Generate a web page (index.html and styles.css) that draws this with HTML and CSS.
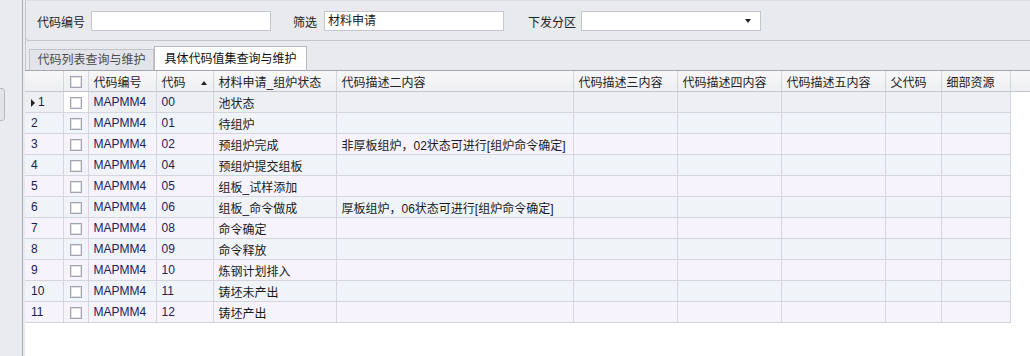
FILE: index.html
```html
<!DOCTYPE html>
<html lang="zh-CN">
<head>
    <meta charset="UTF-8">
    <title>代码值集维护</title>
    <link rel="stylesheet" href="styles.css">
</head>
<body>
    <div class="app">
        <div class="side-bar">
            <div class="side-knob"></div>
        </div>

        <div class="main">
            <!-- 查询条件 -->
            <div class="filter-panel">
                <label class="filter-label lbl-code">代码编号</label>
                <div class="text-box"></div>
                <label class="filter-label lbl-filter">筛选</label>
                <div class="text-box">材料申请</div>
                <label class="filter-label lbl-area">下发分区</label>
                <div class="combo-box"><span class="combo-arrow"></span></div>
            </div>

            <!-- 页签 -->
            <div class="tab-strip">
                <div class="tab">代码列表查询与维护</div>
                <div class="tab active">具体代码值集查询与维护</div>
            </div>

            <!-- 数据表格 -->
            <div class="grid-wrap">
                <table class="grid">
                    <colgroup>
                        <col style="width:38px">
                        <col style="width:25px">
                        <col style="width:68px">
                        <col style="width:57px">
                        <col style="width:123px">
                        <col style="width:237px">
                        <col style="width:104px">
                        <col style="width:104px">
                        <col style="width:104px">
                        <col style="width:56px">
                        <col style="width:69px">
                        <col>
                    </colgroup>
                    <thead>
                        <tr>
                            <th></th>
                            <th class="chk-cell"><span class="chk"></span></th>
                            <th>代码编号</th>
                            <th><span class="sort-up"></span>代码</th>
                            <th>材料申请_组炉状态</th>
                            <th>代码描述二内容</th>
                            <th>代码描述三内容</th>
                            <th>代码描述四内容</th>
                            <th>代码描述五内容</th>
                            <th>父代码</th>
                            <th>细部资源</th>
                            <th class="filler"></th>
                        </tr>
                    </thead>
                    <tbody id="gridBody"></tbody>
                </table>
            </div>
        </div>
    </div>

    <script>
        // 表格数据
        const rows = [
            ['00', '池状态', ''],
            ['01', '待组炉', ''],
            ['02', '预组炉完成', '非厚板组炉，02状态可进行[组炉命令确定]'],
            ['04', '预组炉提交组板', ''],
            ['05', '组板_试样添加', ''],
            ['06', '组板_命令做成', '厚板组炉，06状态可进行[组炉命令确定]'],
            ['08', '命令确定', ''],
            ['09', '命令释放', ''],
            ['10', '炼钢计划排入', ''],
            ['11', '铸坯未产出', ''],
            ['12', '铸坯产出', '']
        ];

        const body = document.getElementById('gridBody');
        let html = '';
        for (let i = 0; i < rows.length; i++) {
            const r = rows[i];
            let cls = i === 0 ? 'focused' : (i % 2 === 1 ? 'even' : 'odd');
            let num = i === 0 ? '<span class="row-mark"></span>1' : (i + 1);
            html += '<tr class="' + cls + '">' +
                '<td class="num">' + num + '</td>' +
                '<td class="chk-cell"><span class="chk"></span></td>' +
                '<td class="code">MAPMM4</td>' +
                '<td class="code">' + r[0] + '</td>' +
                '<td>' + r[1] + '</td>' +
                '<td>' + r[2] + '</td>' +
                '<td></td><td></td><td></td><td></td><td></td>' +
                '<td class="filler"></td>' +
                '</tr>';
        }
        body.innerHTML = html;
    </script>
</body>
</html>
```

FILE: styles.css
```css
body {
    margin: 0;
    width: 1030px;
    height: 356px;
    overflow: hidden;
    background-color: #e9eaee;
    font-family: "Liberation Sans", "Noto Sans CJK SC", sans-serif;
    font-size: 12px;
    color: #1a1a1a;
}

.app {
    display: flex;
    height: 356px;
}

/* 左侧边栏 */
.side-bar {
    width: 22px;
    background-color: #e9ebef;
    border-right: 1px solid #a9aab0;
    margin-right: 2px;
    position: relative;
}

.side-knob {
    position: absolute;
    left: -4px;
    top: 88px;
    width: 7px;
    height: 31px;
    border: 1px solid #b9babf;
    border-radius: 3px;
    background-color: #e2e3e7;
}

.main {
    flex: 1;
    display: flex;
    flex-direction: column;
    border-left: 1px solid #c7c8ce;
}

/* 查询条件 */
.filter-panel {
    height: 41px;
    box-sizing: border-box;
    display: flex;
    align-items: center;
    padding-top: 1px;
    border-top: 1px solid #dcdde2;
    border-bottom: 1px solid #c4c5cb;
    border-bottom-left-radius: 4px;
    margin-left: -1px;
    border-left: 1px solid #c4c5cb;
}

.filter-label {
    color: #222;
}

.lbl-code {
    margin: 0 6px 0 11px;
}

.lbl-filter {
    margin: 0 7px 0 22px;
}

.lbl-area {
    margin: 0 5px 0 24px;
}

.text-box {
    width: 180px;
    height: 20px;
    line-height: 19px;
    padding-left: 3px;
    box-sizing: border-box;
    background-color: #fff;
    border: 1px solid #c6c7cd;
}

.combo-box {
    width: 180px;
    height: 20px;
    box-sizing: border-box;
    background-color: #fff;
    border: 1px solid #c6c7cd;
    position: relative;
}

.combo-arrow {
    position: absolute;
    right: 9px;
    top: 7px;
    border-left: 3px solid transparent;
    border-right: 3px solid transparent;
    border-top: 4px solid #222;
}

/* 页签 */
.tab-strip {
    display: flex;
    align-items: flex-end;
    height: 24px;
    margin-top: 5px;
    padding-left: 3px;
}

.tab {
    height: 21px;
    line-height: 20px;
    box-sizing: border-box;
    border: 1px solid #c2c3c9;
    border-bottom: none;
    background-color: #e3e4e9;
    color: #4a4a4a;
    width: 125px;
    text-align: center;
    white-space: nowrap;
}

.tab.active {
    height: 24px;
    line-height: 24px;
    width: 153px;
    background-color: #fff;
    color: #111;
    border-color: #b8b9c0;
}

/* 数据表格 */
.grid-wrap {
    flex: 1;
    background-color: #fff;
    border-top: 1px solid #a5a6ae;
    margin-left: -1px;
}

.grid {
    border-collapse: collapse;
    table-layout: fixed;
    width: 1005px;
}

.grid th,
.grid td {
    height: 20px;
    padding: 0 0 0 5px;
    border: 1px solid #d5d6dd;
    white-space: nowrap;
    overflow: hidden;
    text-align: left;
    font-weight: normal;
}

.grid th {
    background: linear-gradient(#f7f7f9, #eeeff2);
    border-top: none;
    border-bottom-color: #c6c7ce;
    color: #222;
}

.grid th:first-child,
.grid td:first-child {
    border-left: none;
}

.sort-up {
    float: right;
    margin: 8px 6px 0 0;
    border-left: 3px solid transparent;
    border-right: 3px solid transparent;
    border-bottom: 4px solid #222;
}

.grid td.filler {
    background-color: #fff;
    border: none;
}

.grid th.filler {
    border-right: none;
}

.even td {
    background-color: #f0f4f9;
}

.odd td {
    background-color: #f6f3fc;
}

.focused td {
    background-color: #eeeff2;
}

.focused td.chk-cell {
    background-color: #fff;
}

.num {
    color: #1c1c4e;
    padding-left: 6px !important;
}

.code {
    color: #22225a;
}

.row-mark {
    display: inline-block;
    margin-right: 3px;
    border-top: 4px solid transparent;
    border-bottom: 4px solid transparent;
    border-left: 4px solid #222;
    vertical-align: -1px;
}

.chk-cell {
    padding: 0 !important;
    text-align: center !important;
}

.chk {
    display: inline-block;
    width: 12px;
    height: 12px;
    box-sizing: border-box;
    border: 1px solid #a3a4ab;
    background-color: #fff;
    box-shadow: inset 0 0 0 1px #e2e3e8;
    vertical-align: middle;
}
```
